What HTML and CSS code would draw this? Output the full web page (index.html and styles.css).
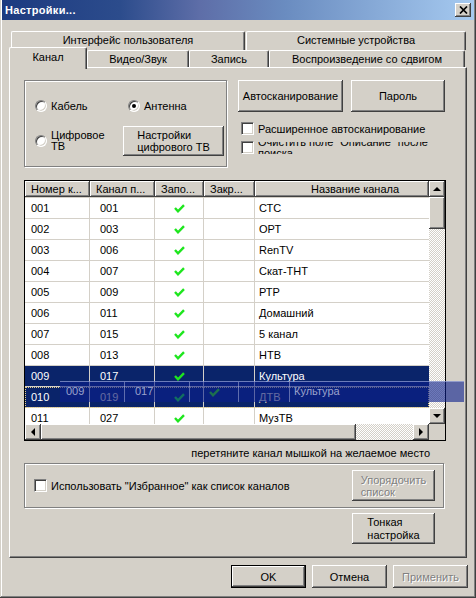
FILE: index.html
```html
<!DOCTYPE html>
<html lang="ru">
<head>
<meta charset="utf-8">
<title>Настройки</title>
<link rel="stylesheet" href="styles.css">
</head>
<body>
<div class="window">
  <div class="titlebar">
    <span class="title">Настройки...</span>
    <span class="close"><svg width="9" height="8" viewBox="0 0 9 8"><path d="M1 0.5 L8 7.5 M8 0.5 L1 7.5" stroke="#000" stroke-width="1.7" fill="none"/></svg></span>
  </div>

  <div class="tabs">
    <div class="tabrow back">
      <div class="tab t-ui">Интерфейс пользователя</div>
      <div class="tab t-sys">Системные устройства</div>
    </div>
    <div class="tabrow front">
      <div class="tab active t-ch">Канал</div>
      <div class="tab t-av">Видео/Звук</div>
      <div class="tab t-rec">Запись</div>
      <div class="tab t-ts">Воспроизведение со сдвигом</div>
    </div>
  </div>

  <div class="panel">
    <div class="top">
      <div class="group source">
        <div class="radio-item"><span class="radio"></span><span>Кабель</span></div>
        <div class="radio-item antenna"><span class="radio checked"></span><span>Антенна</span></div>
        <div class="radio-item digital"><span class="radio"></span><span class="two">Цифровое<br>ТВ</span></div>
        <button class="btn dtv"><span class="ml">Настройки<br>цифрового ТВ</span></button>
      </div>
      <div class="right">
        <div class="btnrow">
          <button class="btn scan">Автосканирование</button>
          <button class="btn pass">Пароль</button>
        </div>
        <div class="check chk1"><span class="cb"></span><span>Расширенное автосканирование</span></div>
        <div class="check chk2"><span class="cb"></span><span class="clip"><span class="cliptext">Очистить поле "Описание" после поиска</span></span></div>
      </div>
    </div>

    <div class="list">
      <div class="lv">
        <div class="lv-head">
          <div class="hc">Номер к...</div>
          <div class="hc">Канал п...</div>
          <div class="hc">Запо...</div>
          <div class="hc">Закр...</div>
          <div class="hc hname">Название канала</div>
        </div>
        <div class="lv-body">
          <div class="row"><div class="c col1">001</div><div class="c col2">001</div><div class="c col3"><svg class="ck" width="11" height="9" viewBox="0 0 11 9"><path d="M1 4 L4 7.3 L10 1.2" fill="none" stroke="#1ee61e" stroke-width="2.4"/></svg></div><div class="c col4"></div><div class="c col5">СТС</div></div>
          <div class="row"><div class="c col1">002</div><div class="c col2">003</div><div class="c col3"><svg class="ck" width="11" height="9" viewBox="0 0 11 9"><path d="M1 4 L4 7.3 L10 1.2" fill="none" stroke="#1ee61e" stroke-width="2.4"/></svg></div><div class="c col4"></div><div class="c col5">ОРТ</div></div>
          <div class="row"><div class="c col1">003</div><div class="c col2">006</div><div class="c col3"><svg class="ck" width="11" height="9" viewBox="0 0 11 9"><path d="M1 4 L4 7.3 L10 1.2" fill="none" stroke="#1ee61e" stroke-width="2.4"/></svg></div><div class="c col4"></div><div class="c col5">RenTV</div></div>
          <div class="row"><div class="c col1">004</div><div class="c col2">007</div><div class="c col3"><svg class="ck" width="11" height="9" viewBox="0 0 11 9"><path d="M1 4 L4 7.3 L10 1.2" fill="none" stroke="#1ee61e" stroke-width="2.4"/></svg></div><div class="c col4"></div><div class="c col5">Скат-ТНТ</div></div>
          <div class="row"><div class="c col1">005</div><div class="c col2">009</div><div class="c col3"><svg class="ck" width="11" height="9" viewBox="0 0 11 9"><path d="M1 4 L4 7.3 L10 1.2" fill="none" stroke="#1ee61e" stroke-width="2.4"/></svg></div><div class="c col4"></div><div class="c col5">РТР</div></div>
          <div class="row"><div class="c col1">006</div><div class="c col2">011</div><div class="c col3"><svg class="ck" width="11" height="9" viewBox="0 0 11 9"><path d="M1 4 L4 7.3 L10 1.2" fill="none" stroke="#1ee61e" stroke-width="2.4"/></svg></div><div class="c col4"></div><div class="c col5">Домашний</div></div>
          <div class="row"><div class="c col1">007</div><div class="c col2">015</div><div class="c col3"><svg class="ck" width="11" height="9" viewBox="0 0 11 9"><path d="M1 4 L4 7.3 L10 1.2" fill="none" stroke="#1ee61e" stroke-width="2.4"/></svg></div><div class="c col4"></div><div class="c col5">5 канал</div></div>
          <div class="row"><div class="c col1">008</div><div class="c col2">013</div><div class="c col3"><svg class="ck" width="11" height="9" viewBox="0 0 11 9"><path d="M1 4 L4 7.3 L10 1.2" fill="none" stroke="#1ee61e" stroke-width="2.4"/></svg></div><div class="c col4"></div><div class="c col5">НТВ</div></div>
          <div class="row sel"><div class="c col1">009</div><div class="c col2">017</div><div class="c col3"><svg class="ck" width="11" height="9" viewBox="0 0 11 9"><path d="M1 4 L4 7.3 L10 1.2" fill="none" stroke="#1ee61e" stroke-width="2.4"/></svg></div><div class="c col4"></div><div class="c col5">Культура</div></div>
          <div class="row sel focus"><div class="c col1">010</div><div class="c col2 under">019</div><div class="c col3"><svg class="ck" width="11" height="9" viewBox="0 0 11 9"><path d="M1 4 L4 7.3 L10 1.2" fill="none" stroke="#1ee61e" stroke-width="2.4"/></svg></div><div class="c col4"></div><div class="c col5 under">ДТВ</div></div>
          <div class="row"><div class="c col1">011</div><div class="c col2">027</div><div class="c col3"><svg class="ck" width="11" height="9" viewBox="0 0 11 9"><path d="M1 4 L4 7.3 L10 1.2" fill="none" stroke="#1ee61e" stroke-width="2.4"/></svg></div><div class="c col4"></div><div class="c col5">МузТВ</div></div>
        </div>
      </div>
      <div class="vscroll">
        <div class="sbtn"><svg width="16" height="16" viewBox="0 0 16 16"><polygon points="4,10 8,6 12,10" fill="#000"/></svg></div>
        <div class="vthumb"></div>
        <div class="track"></div>
        <div class="sbtn"><svg width="16" height="16" viewBox="0 0 16 16"><polygon points="4,6 8,10 12,6" fill="#000"/></svg></div>
      </div>
      <div class="hscroll">
        <div class="sbtn"><svg width="16" height="16" viewBox="0 0 16 16"><polygon points="10,4 6,8 10,12" fill="#000"/></svg></div>
        <div class="hthumb"></div>
        <div class="track"></div>
        <div class="sbtn"><svg width="16" height="16" viewBox="0 0 16 16"><polygon points="6,4 10,8 6,12" fill="#000"/></svg></div>
      </div>
      <div class="corner"></div>
    </div>

    <div class="hint">перетяните канал мышкой на желаемое место</div>

    <div class="group fav">
      <div class="check"><span class="cb"></span><span>Использовать "Избранное" как список каналов</span></div>
      <button class="btn sort disabled"><span class="ml">Упорядочить<br>список</span></button>
    </div>

    <div class="fine-row"><button class="btn fine"><span class="ml">Тонкая<br>настройка</span></button></div>

    <div class="ghost">
      <div class="g g1">009</div>
      <div class="g g2">017</div>
      <div class="g g3"><svg width="11" height="9" viewBox="0 0 11 9"><path d="M1 4 L4 7.3 L10 1.2" fill="none" stroke="#1d6f4e" stroke-width="2.4"/></svg></div>
      <div class="g g4"></div>
      <div class="g g5">Культура</div>
    </div>
  </div>

  <div class="footer">
    <button class="btn fbtn ok">OK</button>
    <button class="btn fbtn">Отмена</button>
    <button class="btn fbtn disabled">Применить</button>
  </div>
</div>
</body>
</html>
```

FILE: styles.css
```css
* { box-sizing: border-box; }

html, body {
  margin: 0;
  padding: 0;
}

body {
  width: 476px;
  height: 598px;
  overflow: hidden;
  background: #d4d0c8;
  font-family: "Liberation Sans", Arial, sans-serif;
  font-size: 11px;
  color: #000;
}

.window {
  width: 476px;
  height: 598px;
  background: #d4d0c8;
  padding: 0 2px 2px;
  box-shadow: inset -1px -1px #404040, inset 1px 0 #d4d0c8, inset -2px -2px #808080, inset 2px 0 #fff;
}

/* title bar */
.titlebar {
  height: 20px;
  display: flex;
  align-items: center;
  justify-content: space-between;
  padding: 0 3px;
  background: linear-gradient(to right, #1c3a80 0%, #2c4c8c 25%, #5e6ea8 42%, #6a8cc0 60%, #a6caf0 100%);
}
.title {
  color: #fff;
  font-weight: bold;
  font-size: 11px;
  letter-spacing: 0.3px;
}
.close {
  width: 16px;
  height: 14px;
  display: flex;
  align-items: center;
  justify-content: center;
  background: #d4d0c8;
  box-shadow: inset -1px -1px #404040, inset 1px 1px #fff, inset -2px -2px #808080;
}

/* tabs */
.tabs {
  margin: 11px 0 0 7px;
}
.tabrow {
  display: flex;
  height: 18px;
  align-items: flex-start;
}
.tabrow.back {
  padding-left: 2px;
}
.tab {
  background: #d4d0c8;
  border-top: 1px solid #fff;
  border-left: 1px solid #fff;
  border-right: 1px solid #404040;
  border-radius: 2px 2px 0 0;
  box-shadow: inset -1px 0 #808080;
  text-align: center;
  white-space: nowrap;
}
.back .tab {
  height: 19px;
  line-height: 17px;
}
.t-ui { width: 234px; }
.t-sys { width: 220px; margin-left: 1px; }
.front .tab {
  margin-top: 1px;
  height: 17px;
  line-height: 16px;
}
.front .tab.active {
  position: relative;
  z-index: 2;
  margin-top: -2px;
  height: 22px;
  padding-top: 2px;
  line-height: 14px;
}
.t-ch { width: 78px; }
.t-av { width: 102px; }
.t-rec { width: 80px; }
.t-ts { width: 196px; }

/* panel */
.panel {
  position: relative;
  margin-left: 7px;
  width: 458px;
  height: 491px;
  border: 1px solid;
  border-color: #fff #404040 #404040 #fff;
  box-shadow: inset -1px -1px #808080;
  padding: 12px 0 0 14px;
}

.group {
  border: 1px solid #808080;
  box-shadow: inset 1px 1px #fff, 1px 1px #fff;
}

.top {
  display: flex;
  height: 87px;
}
.source {
  width: 203px;
  height: 87px;
  display: grid;
  grid-template-columns: 88px 101px;
  grid-template-rows: 13px 30px;
  row-gap: 14px;
  padding: 18px 0 0 10px;
}
.radio-item {
  display: flex;
  align-items: center;
  gap: 4px;
  white-space: nowrap;
}
.antenna { margin-left: 5px; }
.two { line-height: 11px; }
.radio {
  flex: none;
  width: 12px;
  height: 12px;
  border-radius: 50%;
  border: 1px solid;
  border-color: #808080 #fff #fff #808080;
  background: #fff;
  box-shadow: inset 1px 1px #404040, inset -1px -1px #d4d0c8;
  display: flex;
  align-items: center;
  justify-content: center;
}
.radio.checked::after {
  content: "";
  width: 4px;
  height: 4px;
  border-radius: 50%;
  background: #000;
}

.btn {
  font-family: inherit;
  font-size: 11px;
  font-weight: normal;
  color: #000;
  background: #d4d0c8;
  border: 0;
  padding: 0;
  margin: 0;
  text-align: center;
  line-height: 12px;
  box-shadow: inset -1px -1px #404040, inset 1px 1px #fff, inset -2px -2px #808080;
}
.btn .ml {
  display: inline-block;
  text-align: left;
}
.btn.disabled {
  color: #808080;
  text-shadow: 1px 1px 0 #fff;
}
.dtv {
  width: 101px;
  height: 30px;
}

.right {
  margin-left: 11px;
}
.btnrow {
  display: flex;
  gap: 8px;
}
.scan { width: 105px; height: 32px; }
.pass { width: 94px; height: 32px; }

.check {
  display: flex;
  align-items: center;
  gap: 4px;
  white-space: nowrap;
}
.right .check { margin-left: 3px; }
.chk1 { margin-top: 10px; height: 13px; }
.chk2 { margin-top: 6px; align-items: flex-start; }
.cb {
  flex: none;
  width: 13px;
  height: 13px;
  background: #fff;
  border: 1px solid;
  border-color: #808080 #fff #fff #808080;
  box-shadow: inset 1px 1px #404040, inset -1px -1px #d4d0c8;
}
.clip {
  display: block;
  width: 186px;
  height: 12px;
  margin-top: 1px;
  overflow: hidden;
  white-space: normal;
}
.cliptext {
  display: block;
  line-height: 11px;
  margin-top: -5px;
}

/* list view */
.list {
  margin-top: 13px;
  width: 422px;
  border: 1px solid #000;
  display: grid;
  grid-template-columns: 404px 16px;
  grid-template-rows: 243px 16px;
}
.lv {
  overflow: hidden;
  background: #fff;
}
.lv-head, .row, .ghost {
  display: grid;
  grid-template-columns: 65px 65px 49px 51px 174px;
}
.lv-head {
  height: 16px;
  background: #d4d0c8;
}
.hc {
  box-shadow: inset -1px -1px #404040, inset 1px 1px #fff, inset -2px -2px #808080;
  padding-left: 6px;
  line-height: 16px;
  white-space: nowrap;
  overflow: hidden;
}
.hname {
  text-align: center;
  padding-left: 26px;
}
.lv-body {
  border-top: 1px solid #d4d0c8;
}
.row {
  height: 21px;
  border-bottom: 1px solid #d4d0c8;
}
.c {
  border-right: 1px solid #d4d0c8;
  line-height: 20px;
  white-space: nowrap;
  overflow: hidden;
}
.col1 { padding-left: 6px; }
.col2 { padding-left: 10px; }
.col3 {
  display: flex;
  align-items: center;
  justify-content: center;
}
.col5 { padding-left: 4px; border-right: 0; }
.row.sel {
  background: #0a246a;
  color: #fff;
}
.row.sel .c.under { color: #e6dcc0; }
.row.focus {
  outline: 1px dotted #e6d08a;
  outline-offset: -1px;
}

.vscroll, .hscroll {
  display: flex;
  background: #d4d0c8;
}
.vscroll { flex-direction: column; }
.sbtn {
  flex: none;
  width: 16px;
  height: 16px;
  background: #d4d0c8;
  box-shadow: inset -1px -1px #404040, inset 1px 1px #fff, inset -2px -2px #808080;
}
.sbtn svg { display: block; }
.vthumb {
  flex: none;
  height: 32px;
  background: #d4d0c8;
  box-shadow: inset -1px -1px #404040, inset 1px 1px #fff, inset -2px -2px #808080;
}
.hthumb {
  flex: none;
  width: 315px;
  background: #d4d0c8;
  box-shadow: inset -1px -1px #404040, inset 1px 1px #fff, inset -2px -2px #808080;
}
.track {
  flex: 1;
  background-color: #fff;
  background-image: conic-gradient(#d4d0c8 25%, #fff 0 50%, #d4d0c8 0 75%, #fff 0);
  background-size: 2px 2px;
}
.corner { background: #d4d0c8; }

.hint {
  margin-top: 5px;
  width: 406px;
  line-height: 14px;
  text-align: right;
  white-space: nowrap;
}

.fav {
  margin-top: 3px;
  width: 420px;
  height: 45px;
  display: flex;
  align-items: center;
  padding-left: 9px;
}
.sort {
  margin-left: auto;
  margin-right: 8px;
  width: 83px;
  height: 31px;
}

.fine-row {
  margin-top: 5px;
  width: 420px;
  display: flex;
  justify-content: flex-end;
  padding-right: 9px;
}
.fine {
  width: 83px;
  height: 31px;
  line-height: 13px;
}

/* drag image overlay */
.ghost {
  position: absolute;
  left: 50px;
  top: 313px;
  width: 404px;
  height: 21px;
  background: rgba(10, 30, 140, 0.6);
  border-top: 1px solid rgba(190, 200, 235, 0.55);
  color: #9aa2cc;
}
.g {
  border-right: 1px solid rgba(200, 205, 230, 0.45);
  line-height: 19px;
  white-space: nowrap;
}
.g1 { padding-left: 6px; }
.g2 { padding-left: 10px; }
.g3 {
  display: flex;
  align-items: center;
  justify-content: center;
}
.g5 { padding-left: 4px; border-right: 0; }

/* footer */
.footer {
  margin-top: 7px;
  display: flex;
  justify-content: flex-end;
  gap: 6px;
  padding-right: 6px;
}
.fbtn {
  width: 75px;
  height: 23px;
}
.fbtn.ok {
  box-shadow: inset 0 0 0 1px #000, inset -2px -2px #404040, inset 2px 2px #fff, inset -3px -3px #808080;
}
```
